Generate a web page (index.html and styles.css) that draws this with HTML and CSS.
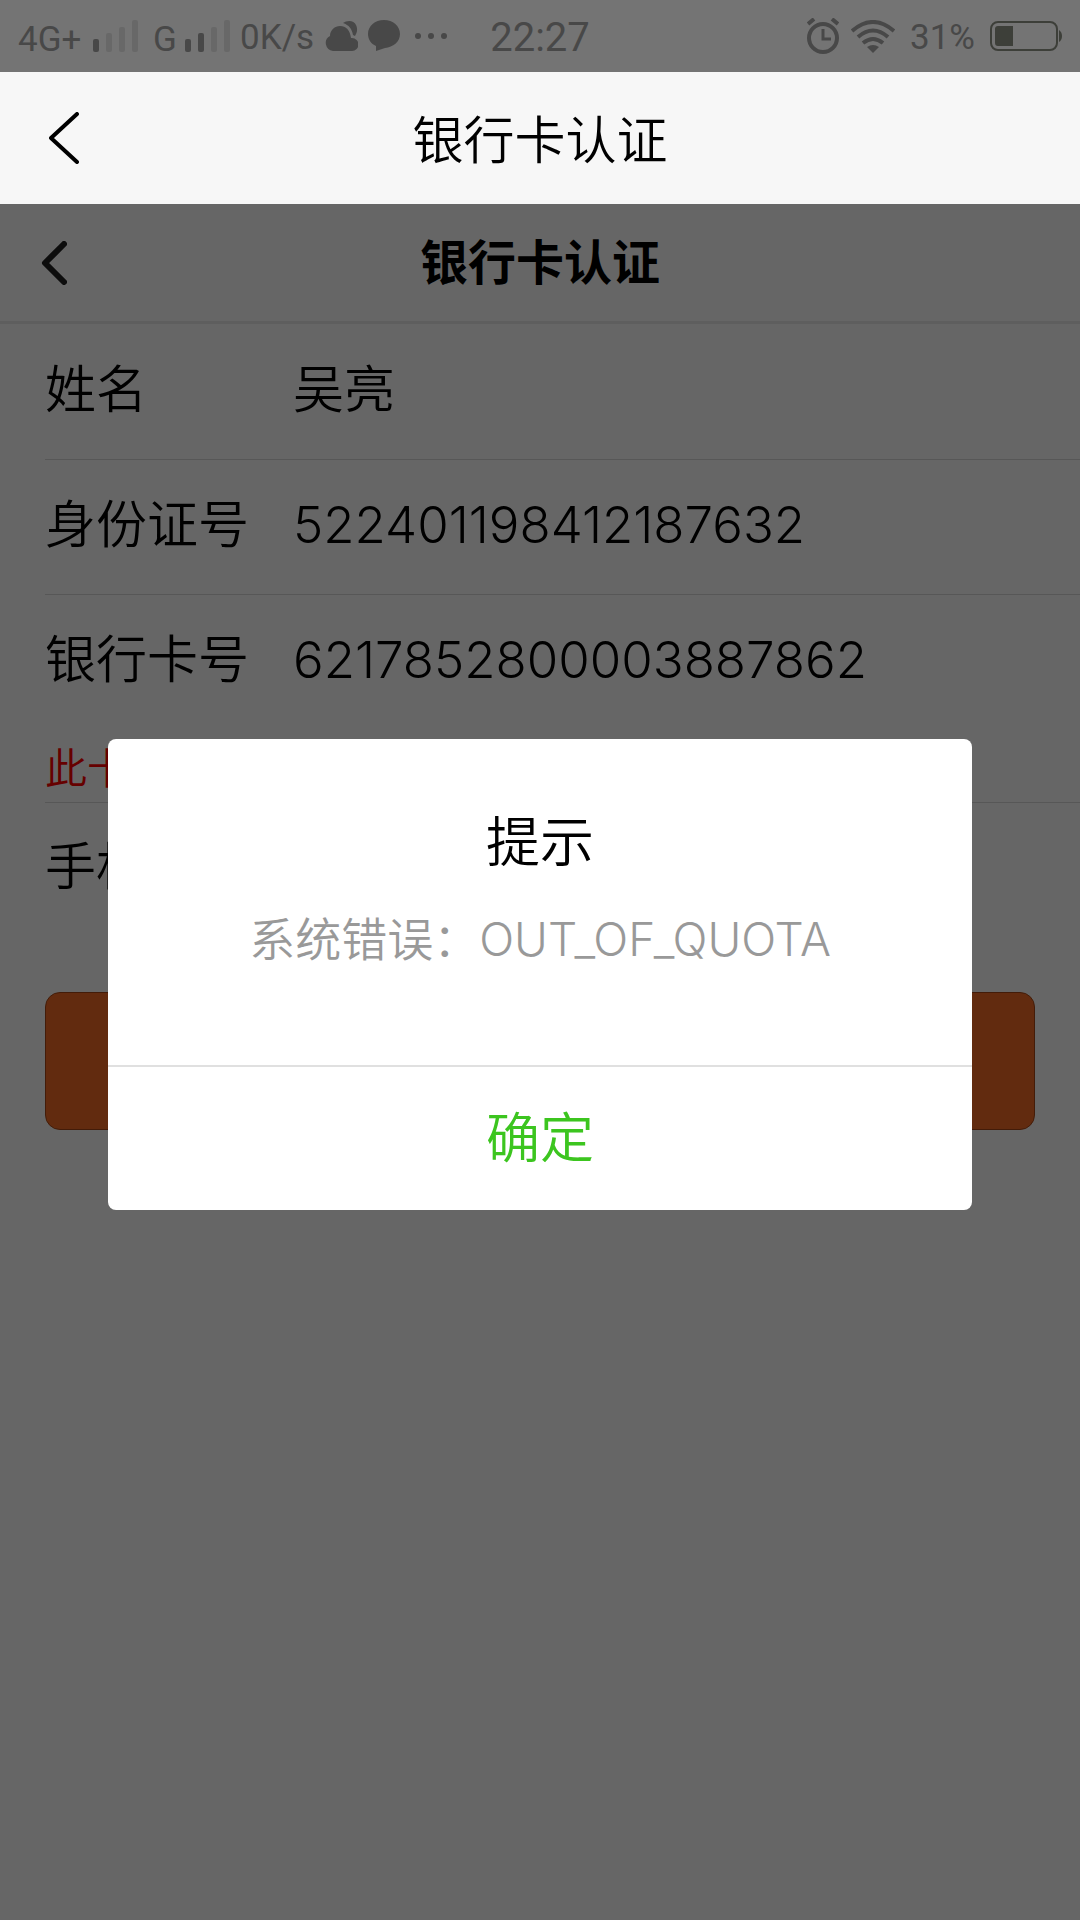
FILE: index.html
```html
<!DOCTYPE html>
<html lang="zh-CN">
<head>
<meta charset="utf-8">
<meta name="viewport" content="width=device-width, initial-scale=1">
<title>银行卡认证</title>
<link rel="stylesheet" href="styles.css">
</head>
<body>
<div class="status">
  <div class="status-left">
    <span class="network">4G+</span>
    <svg class="signal" width="46" height="32" viewBox="0 0 46 32" aria-hidden="true"><rect class="on" y="19" width="6" height="13" rx="2"/><rect x="13" y="13" width="6" height="19" rx="2"/><rect x="26" y="7" width="6" height="25" rx="2"/><rect x="39" width="6" height="32" rx="2"/></svg>
    <span class="network second">G</span>
    <svg class="signal" width="46" height="32" viewBox="0 0 46 32" aria-hidden="true"><rect class="on" y="19" width="6" height="13" rx="2"/><rect class="on" x="13" y="13" width="6" height="19" rx="2"/><rect x="26" y="7" width="6" height="25" rx="2"/><rect x="39" width="6" height="32" rx="2"/></svg>
    <span class="speed">0K/s</span>
    <svg class="cloud" width="33" height="32" viewBox="0 0 33 32" aria-hidden="true"><path d="M8 31a8 8 0 0 1-3-15C5 10 10 6 15 6c6 0 10 4 11 12h1a6 6 0 0 1 0 13z"/><path d="M18 3c4-3 11-3 13 2 2 4 1 8-1 11l-2-1c-1-6-4-10-10-12z"/></svg>
    <svg class="bubble" width="33" height="32" viewBox="0 0 33 32" aria-hidden="true"><path d="M16 0c9 0 16 6 16 14s-7 13-15 14l-9 3v-5C3 24 0 19 0 14 0 6 7 0 16 0z"/></svg>
    <svg class="more" width="33" height="8" viewBox="0 0 33 8" aria-hidden="true"><circle cx="3" cy="4" r="3"/><circle cx="16" cy="4" r="3"/><circle cx="29" cy="4" r="3"/></svg>
  </div>
  <time class="clock">22:27</time>
  <div class="status-right">
    <svg class="alarm" width="32" height="36" viewBox="0 0 32 36" aria-hidden="true"><g fill="none" stroke="#484848" stroke-width="4"><circle cx="16" cy="20" r="14"/><path stroke-width="3" d="M16 11v10h8"/><path d="M1 6l6-5M31 6l-6-5"/></g></svg>
    <svg class="wifi" width="44" height="33" viewBox="0 0 44 33" aria-hidden="true"><g fill="none" stroke="#484848" stroke-width="4"><path d="M1 11q21-18 42 0M7 17q15-13 30 0M12 23q10-8 20 0"/></g><path d="M16 27q6-4 12 0l-6 6z"/></svg>
    <span class="percent">31%</span>
    <svg class="battery" width="72" height="30" viewBox="0 0 72 30" aria-hidden="true"><rect x="1" y="1" width="66" height="28" rx="7" fill="none" stroke="#3d3f39" stroke-width="2"/><path fill="#3d3f39" d="M8 5h15v20H8q-3 0-3-3V8q0-3 3-3zM69 9q3 2 3 6t-3 6z"/></svg>
  </div>
</div>

<header class="navbar">
  <button class="back" type="button" aria-label="返回"><svg width="30" height="52" viewBox="0 0 30 52"><path d="M28 2 2 26l26 24"/></svg></button>
  <h1 class="nav-title">银行卡认证</h1>
</header>

<div class="webview">
  <main>
    <header class="page-head">
      <button class="back small" type="button" aria-label="返回上一页"><svg width="26" height="44" viewBox="0 0 26 44"><path d="M23 3 4 22l19 19"/></svg></button>
      <h2 class="page-title">银行卡认证</h2>
    </header>
    <form class="form">
      <div class="row"><label for="name">姓名</label><input id="name" type="text" value="吴亮"></div>
      <div class="row"><label for="idno">身份证号</label><input id="idno" type="text" value="522401198412187632"></div>
      <div class="row card"><label for="card">银行卡号</label><input id="card" type="text" value="6217852800003887862"><p class="hint">此卡</p></div>
      <div class="row last"><label for="phone">手机号</label><input id="phone" type="tel"></div>
      <button class="submit" type="submit" aria-label="提交"></button>
    </form>
  </main>
  <div class="mask">
    <section class="dialog" role="alertdialog" aria-labelledby="dlg-title" aria-describedby="dlg-text">
      <h3 class="dialog-title" id="dlg-title">提示</h3>
      <p class="dialog-text" id="dlg-text">系统错误：OUT_OF_QUOTA</p>
      <button class="confirm" type="button">确定</button>
    </section>
  </div>
</div>
</body>
</html>
```
FILE: styles.css
```css
* { box-sizing: border-box; }

body {
  margin: 0;
  min-height: 100vh;
  display: flex;
  flex-direction: column;
  font-family: Inter, "Noto Sans CJK SC", sans-serif;
  font-weight: 350;
  color: #000;
  background: #fff;
}

h1, h2, h3, p { margin: 0; }
svg { display: block; flex: none; }

button, input {
  font: inherit;
  color: inherit;
  border: 0;
  padding: 0;
  background: none;
}

/* Status bar */
.status {
  height: 72px;
  padding: 2px 18px 0;
  display: grid;
  grid-template-columns: 1fr auto 1fr;
  align-items: center;
  background: #747474;
  color: #484848;
  fill: #484848;
  font-family: Roboto, "Noto Sans CJK SC", sans-serif;
  font-size: 35px;
  font-weight: 400;
  line-height: 40px;
  white-space: nowrap;
}

.status-left, .status-right { display: flex; align-items: center; }
.status-right { justify-content: flex-end; }
.status svg { margin-top: -2px; }
.network { padding-top: 6px; width: 75px; }
.network.second { width: 32px; margin-left: 14px; }
.signal { fill: #686868; }
.signal .on { fill: #484848; }
.speed { padding-top: 2px; width: 74px; margin-left: 9px; }
.cloud { margin-left: 11px; }
.bubble { margin-left: 10px; }
.more { margin-left: 14px; }
.clock { padding-top: 2px; font-size: 40px; }
.wifi { margin-left: 12px; }
.percent { padding-top: 2px; margin-left: 15px; }
.battery { margin-left: 15px; }

/* App navigation bar */
.navbar {
  height: 132px;
  display: grid;
  grid-template-columns: 130px 1fr 130px;
  align-items: center;
  background: #f7f7f7;
}

.nav-title, .page-title { text-align: center; }
.nav-title { padding-top: 6px; font-size: 51px; font-weight: 350; line-height: 72px; }

.back { height: 100%; padding-left: 49px; }
.back path {
  fill: none;
  stroke: #000;
  stroke-width: 4;
  stroke-linecap: round;
  stroke-linejoin: round;
}
.back.small { padding-left: 41px; }
.back.small path { stroke: #222; stroke-width: 6; }

/* Page content */
.webview { flex: 1; position: relative; }

.page-head {
  height: 120px;
  display: grid;
  grid-template-columns: 130px 1fr 130px;
  align-items: center;
  border-bottom: 3px solid #ececec;
}
.page-title { font-size: 48px; font-weight: 700; line-height: 72px; }

.form { padding: 1px 0 0 45px; font-size: 51px; line-height: 72px; }

.row {
  display: grid;
  grid-template-columns: 248px 1fr;
  padding: 29px 0 33px;
  border-bottom: 1px solid #d9d9d9;
}
.row input { width: 100%; height: 72px; }
.row.card { padding-bottom: 0; }
.row.last { padding-top: 28px; border-bottom: 0; }

.hint {
  grid-column: 1 / -1;
  margin-top: 43px;
  padding-bottom: 3px;
  font-size: 42px;
  line-height: 60px;
  color: #f00;
}

.submit {
  display: block;
  width: calc(100% - 45px);
  height: 138px;
  margin-top: 56px;
  border: 1px solid #a84818;
  border-radius: 15px;
  background: #f56c26;
}

/* Dialog */
.mask {
  position: absolute;
  inset: 0;
  padding-top: 535px;
  background: rgba(0, 0, 0, 0.6);
}

.dialog {
  width: 80%;
  margin: 0 auto;
  padding-top: 66px;
  border-radius: 8px;
  background: #fff;
  text-align: center;
}
.dialog-title { font-size: 54px; font-weight: 350; line-height: 76px; }
.dialog-text {
  padding: 26px 40px 94px;
  font-size: 46px;
  line-height: 64px;
  color: #999;
}
.confirm {
  display: block;
  width: 100%;
  height: 145px;
  border-top: 2px solid #e0e0e0;
  font-size: 54px;
  line-height: 76px;
  color: #3cc51f;
}
```
